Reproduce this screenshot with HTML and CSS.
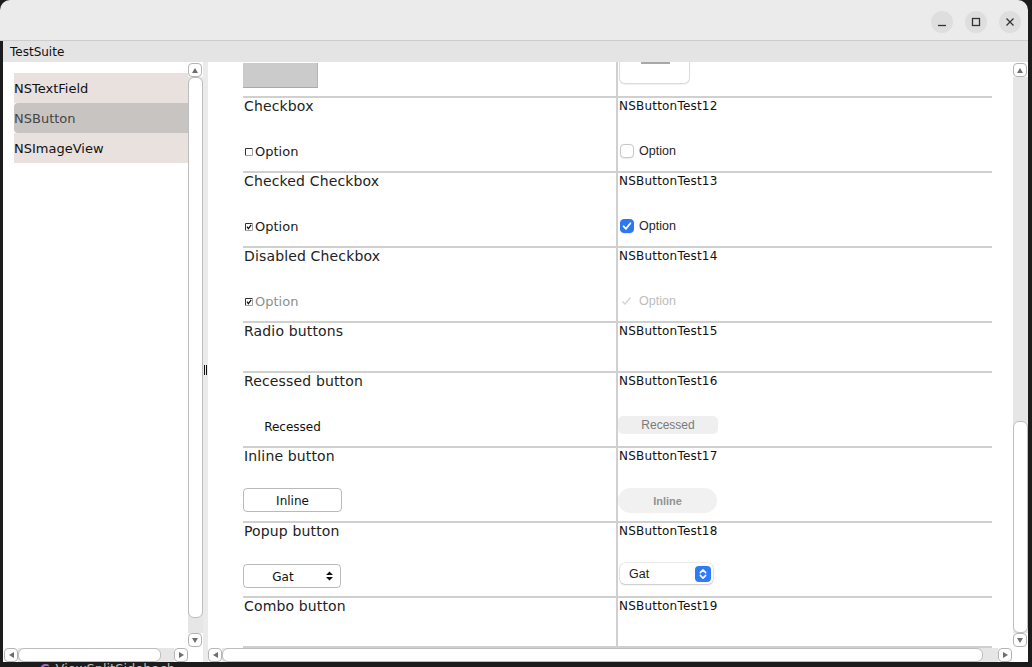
FILE: index.html
```html
<!DOCTYPE html>
<html>
<head>
<meta charset="utf-8">
<link rel="stylesheet" href="styles.css">
</head>
<body>
<div class="titlebar">
  <div class="tb-btn"><svg width="10" height="10" viewBox="0 0 10 10"><path d="M1 8.5H9" stroke="#333" stroke-width="1.3" fill="none"/></svg></div>
  <div class="tb-btn"><svg width="10" height="10" viewBox="0 0 10 10"><rect x="1.5" y="1.5" width="7" height="7" stroke="#333" stroke-width="1.3" fill="none"/></svg></div>
  <div class="tb-btn"><svg width="10" height="10" viewBox="0 0 10 10"><path d="M1.5 1.5L8.5 8.5M8.5 1.5L1.5 8.5" stroke="#333" stroke-width="1.3" fill="none"/></svg></div>
</div>
<div class="win">
  <div class="menubar">TestSuite</div>
  <div class="main">
    <div class="sidebar">
      <div class="pane">
        <div class="side-list">
          <div class="item">NSTextField</div>
          <div class="item sel">NSButton</div>
          <div class="item">NSImageView</div>
        </div>
        <div class="vs side-v">
          <div class="arr"><svg width="6" height="5" viewBox="0 0 6 5"><path d="M0 5L3 0L6 5Z" fill="#6e6e6e"/></svg></div>
          <div class="track"><div class="knob"></div><div class="rest"></div></div>
          <div class="arr"><svg width="6" height="5" viewBox="0 0 6 5"><path d="M0 0L3 5L6 0Z" fill="#6e6e6e"/></svg></div>
        </div>
      </div>
      <div class="hs side-h">
        <div class="arr"><svg width="5" height="6" viewBox="0 0 5 6"><path d="M5 0L0 3L5 6Z" fill="#6e6e6e"/></svg></div>
        <div class="htrack"><div class="hknob"></div></div>
        <div class="arr"><svg width="5" height="6" viewBox="0 0 5 6"><path d="M0 0L5 3L0 6Z" fill="#6e6e6e"/></svg></div>
        <div class="corner"></div>
      </div>
    </div>
    <div class="splitter"><span class="grip"></span></div>
    <div class="content">
      <div class="pane">
        <div class="doc">
          <div class="rows">
            <div class="row partial">
              <div class="cell-l"><div class="ctl graybox"></div></div>
              <div class="cell-r"><div class="ctl whitebox"><span class="wb-bar"></span></div></div>
            </div>

            <div class="row">
              <div class="cell-l">
                <div class="title">Checkbox</div>
                <div class="ctl gopt"><svg class="gcb" width="8" height="8" viewBox="0 0 8 8"><path d="M0.5 7.5V0.5H7.5" stroke="#333" fill="none"/><path d="M7.5 0.5V7.5H0.5" stroke="#a0a0a0" fill="none"/></svg><span>Option</span></div>
              </div>
              <div class="cell-r">
                <div class="label">NSButtonTest12</div>
                <div class="ctl mopt"><span class="mcb"></span><span>Option</span></div>
              </div>
            </div>

            <div class="row">
              <div class="cell-l">
                <div class="title">Checked Checkbox</div>
                <div class="ctl gopt"><svg class="gcb" width="8" height="8" viewBox="0 0 8 8"><path d="M0.5 7.5V0.5H7.5" stroke="#333" fill="none"/><path d="M7.5 0.5V7.5H0.5" stroke="#a0a0a0" fill="none"/><path d="M2 3.6L3.4 5.6L6.2 1.8" stroke="#111" stroke-width="1.2" fill="none"/></svg><span>Option</span></div>
              </div>
              <div class="cell-r">
                <div class="label">NSButtonTest13</div>
                <div class="ctl mopt"><span class="mcb on"><svg width="14" height="14" viewBox="0 0 14 14"><path d="M3.6 7.3L6 9.8L10.4 4.2" stroke="#fff" stroke-width="1.8" fill="none" stroke-linecap="round" stroke-linejoin="round"/></svg></span><span>Option</span></div>
              </div>
            </div>

            <div class="row">
              <div class="cell-l">
                <div class="title">Disabled Checkbox</div>
                <div class="ctl gopt dis"><svg class="gcb" width="8" height="8" viewBox="0 0 8 8"><path d="M0.5 7.5V0.5H7.5" stroke="#333" fill="none"/><path d="M7.5 0.5V7.5H0.5" stroke="#a0a0a0" fill="none"/><path d="M2 3.6L3.4 5.6L6.2 1.8" stroke="#111" stroke-width="1.2" fill="none"/></svg><span>Option</span></div>
              </div>
              <div class="cell-r">
                <div class="label">NSButtonTest14</div>
                <div class="ctl mopt dis"><span class="mcb-off"><svg width="14" height="14" viewBox="0 0 14 14"><path d="M2.5 7.5L5 10L10.5 3.5" stroke="#d2d2d2" stroke-width="1.2" fill="none"/></svg></span><span>Option</span></div>
              </div>
            </div>

            <div class="row short">
              <div class="cell-l"><div class="title">Radio buttons</div></div>
              <div class="cell-r"><div class="label">NSButtonTest15</div></div>
            </div>

            <div class="row">
              <div class="cell-l">
                <div class="title">Recessed button</div>
                <div class="ctl plainbtn">Recessed</div>
              </div>
              <div class="cell-r">
                <div class="label">NSButtonTest16</div>
                <div class="ctl m-rec">Recessed</div>
              </div>
            </div>

            <div class="row">
              <div class="cell-l">
                <div class="title">Inline button</div>
                <div class="ctl btn">Inline</div>
              </div>
              <div class="cell-r">
                <div class="label">NSButtonTest17</div>
                <div class="ctl m-inline">Inline</div>
              </div>
            </div>

            <div class="row">
              <div class="cell-l">
                <div class="title">Popup button</div>
                <div class="ctl popup"><span class="pop-text">Gat</span><svg class="pop-arr" width="7" height="10" viewBox="0 0 7 10"><path d="M0 4L3.5 0.5L7 4Z M0 6L3.5 9.5L7 6Z" fill="#111"/></svg></div>
              </div>
              <div class="cell-r">
                <div class="label">NSButtonTest18</div>
                <div class="ctl m-pop"><span class="pop-text">Gat</span><span class="blue"><svg width="16" height="16" viewBox="0 0 16 16"><path d="M5.3 6.6L8 3.9L10.7 6.6M5.3 9.4L8 12.1L10.7 9.4" stroke="#fff" stroke-width="1.5" fill="none" stroke-linecap="round" stroke-linejoin="round"/></svg></span></div>
              </div>
            </div>

            <div class="row short">
              <div class="cell-l"><div class="title">Combo button</div></div>
              <div class="cell-r"><div class="label">NSButtonTest19</div></div>
            </div>
            <div class="endline"></div>
          </div>
        </div>
        <div class="vs doc-v">
          <div class="arr"><svg width="6" height="5" viewBox="0 0 6 5"><path d="M0 5L3 0L6 5Z" fill="#6e6e6e"/></svg></div>
          <div class="track"><div class="rest"></div><div class="knob"></div></div>
          <div class="arr"><svg width="6" height="5" viewBox="0 0 6 5"><path d="M0 0L3 5L6 0Z" fill="#6e6e6e"/></svg></div>
        </div>
      </div>
      <div class="hs doc-h">
        <div class="arr"><svg width="5" height="6" viewBox="0 0 5 6"><path d="M5 0L0 3L5 6Z" fill="#6e6e6e"/></svg></div>
        <div class="htrack"><div class="hknob"></div></div>
        <div class="arr"><svg width="5" height="6" viewBox="0 0 5 6"><path d="M0 0L5 3L0 6Z" fill="#6e6e6e"/></svg></div>
        <div class="corner"></div>
      </div>
    </div>
  </div>
</div>
<div class="dock"><span class="dock-ic">C</span><span class="dock-txt">ViewSplitSidebach</span></div>
</body>
</html>
```

FILE: styles.css
```css
* { box-sizing: border-box; }
body {
  margin: 0;
  width: 1032px;
  height: 667px;
  overflow: hidden;
  background: #1c1c1c;
  font-family: "DejaVu Sans", sans-serif;
  color: #1a1a1a;
}
.titlebar {
  width: 1028px;
  height: 41px;
  background: #ebebeb;
  border-bottom: 1px solid #cdcdcd;
  border-radius: 10px 10px 0 0;
  display: flex;
  justify-content: flex-end;
  align-items: center;
  gap: 12px;
  padding: 3px 7px 0 0;
}
.tb-btn {
  width: 22px;
  height: 22px;
  border-radius: 50%;
  background: #dedede;
  display: flex;
  align-items: center;
  justify-content: center;
}
.win {
  margin-left: 3px;
  width: 1025px;
  height: 621px;
  background: #fff;
  display: flex;
  flex-direction: column;
}
.menubar {
  flex: none;
  height: 21px;
  background: #e4e4e4;
  font-size: 12px;
  line-height: 20px;
  padding: 1px 0 0 7px;
  color: #111;
}
.main { flex: 1; display: flex; min-height: 0; }
.sidebar { width: 200px; flex: none; display: flex; flex-direction: column; }
.pane { flex: 1; display: flex; min-height: 0; }
.side-list { flex: 1; padding: 11px 0 0 11px; background: #fff; }
.item {
  height: 30px;
  line-height: 28px;
  padding-top: 2px;
  font-size: 13px;
  background: #e8e1de;
  color: #111;
  white-space: nowrap;
}
.item.sel { background: #c8c4c2; color: #454545; border-radius: 4px 0 0 4px; }

.vs { width: 15px; flex: none; display: flex; flex-direction: column; padding: 1px 0; background: #fff; }
.arr {
  width: 14px;
  height: 14px;
  flex: none;
  border: 1px solid #b4b4b4;
  border-radius: 4px;
  background: #fff;
  display: flex;
  align-items: center;
  justify-content: center;
}
.track { flex: 1; background: #e6e6e6; display: flex; flex-direction: column; }
.knob { background: #fff; border: 1px solid #bdbdbd; border-radius: 6px; }
.side-v .knob { flex: 1; }
.side-v .rest { flex: none; height: 15px; }
.doc-v .rest { flex: 1; }
.doc-v .knob { flex: none; height: 212px; }

.hs { height: 14px; flex: none; display: flex; background: #fff; }
.htrack { flex: 1; background: #e6e6e6; display: flex; }
.hknob { background: #fff; border: 1px solid #bdbdbd; border-radius: 6px; }
.side-h { padding-left: 1px; }
.side-h .hknob { width: 143px; }
.side-h .corner { width: 15px; }
.doc-h .hknob { width: 761px; }
.doc-h .corner { width: 16px; }

.splitter {
  width: 5px;
  flex: none;
  background: #ebebeb;
  display: flex;
  align-items: center;
  justify-content: center;
  padding-top: 16px;
}
.grip { width: 3px; height: 10px; border-left: 1px solid #111; border-right: 1px solid #111; margin-left: -1px; }

.content { flex: 1; display: flex; flex-direction: column; min-width: 0; }
.doc { flex: 1; background: #fff; padding-left: 35px; overflow: hidden; }
.rows { width: 749px; }
.row { display: flex; height: 75px; border-top: 2px solid #d0d0d0; }
.row.short { height: 50px; }
.row.partial { height: 34px; border-top: 0; overflow: hidden; }
.cell-l {
  width: 375px;
  flex: none;
  border-right: 2px solid #d0d0d0;
  padding-left: 1px;
  display: flex;
  flex-direction: column;
}
.cell-r { flex: 1; padding-left: 1px; display: flex; flex-direction: column; }
.title { font-size: 14px; line-height: 17px; color: #222; white-space: nowrap; letter-spacing: 0.15px; }
.label { font-size: 12px; line-height: 14px; padding-top: 1px; color: #111; white-space: nowrap; letter-spacing: 0.2px; }
.ctl { margin-top: auto; flex: none; }

.graybox {
  width: 76px;
  height: 25px;
  margin-left: -2px;
  margin-bottom: 8px;
  background: #cbcbcb;
  border-right: 1px solid #b5b5b5;
  border-bottom: 1px solid #a9a9a9;
}
.whitebox {
  width: 71px;
  height: 22px;
  margin-bottom: 12px;
  background: #fff;
  border: 1px solid #dcdcdc;
  border-top: 0;
  border-radius: 0 0 6px 6px;
  box-shadow: 0 1px 1px rgba(0,0,0,0.06);
  display: flex;
  justify-content: center;
}
.wb-bar { width: 29px; height: 2px; background: #a8a8a8; margin-left: 2px; }

.gopt {
  display: flex;
  align-items: center;
  gap: 2px;
  font-size: 13px;
  line-height: 16px;
  margin-bottom: 11px;
  padding-left: 1px;
  color: #1a1a1a;
}
.gopt.dis span { color: #8e8e8e; }
.gcb { flex: none; }

.mopt {
  display: flex;
  align-items: center;
  gap: 5px;
  height: 14px;
  margin-left: 1px;
  margin-bottom: 13px;
  font-family: "Liberation Sans", Arial, sans-serif;
  font-size: 12.5px;
  color: #262626;
}
.mopt.dis span { color: #bdbdbd; }
.mcb {
  width: 14px;
  height: 14px;
  flex: none;
  border-radius: 4px;
  border: 1px solid #c9c9c9;
  background: #fff;
  box-shadow: 0 0.5px 1px rgba(0,0,0,0.08);
}
.mcb.on { background: #2b77f4; border-color: #2b77f4; }
.mcb.on svg { display: block; margin: -1px; }
.mcb-off { width: 14px; height: 14px; flex: none; }
.mcb-off svg { display: block; }

.plainbtn {
  width: 99px;
  height: 24px;
  margin-left: -1px;
  margin-bottom: 8px;
  padding-top: 1px;
  display: flex;
  align-items: center;
  justify-content: center;
  font-size: 12px;
  color: #111;
}
.m-rec {
  width: 100px;
  height: 18px;
  margin-left: -1px;
  margin-bottom: 12px;
  border-radius: 5px;
  background: #efefef;
  display: flex;
  align-items: center;
  justify-content: center;
  font-family: "Liberation Sans", Arial, sans-serif;
  font-size: 12px;
  color: #7a7a7a;
}
.btn {
  width: 99px;
  height: 24px;
  margin-left: -1px;
  margin-bottom: 9px;
  padding-top: 2px;
  border: 1px solid #b9b9b9;
  border-radius: 4px;
  background: #fff;
  display: flex;
  align-items: center;
  justify-content: center;
  font-size: 12px;
  color: #111;
}
.m-inline {
  width: 99px;
  height: 25px;
  margin-left: -1px;
  margin-bottom: 8px;
  border-radius: 13px;
  background: #f1f1f1;
  display: flex;
  align-items: center;
  justify-content: center;
  font-family: "Liberation Sans", Arial, sans-serif;
  font-size: 11px;
  font-weight: bold;
  color: #929292;
}
.popup {
  width: 98px;
  height: 24px;
  margin-left: -1px;
  margin-bottom: 8px;
  border: 1px solid #b9b9b9;
  border-radius: 4px;
  background: #fff;
  display: flex;
  align-items: center;
  font-size: 12px;
  color: #111;
}
.popup .pop-text { flex: 1; text-align: center; padding-top: 2px; }
.pop-arr { flex: none; margin: 0 7px 0 4px; }
.m-pop {
  width: 93px;
  height: 21px;
  margin-left: 1px;
  margin-bottom: 12px;
  border-radius: 5px;
  background: #fff;
  box-shadow: 0 0 0 0.5px rgba(0,0,0,0.14), 0 1px 2px rgba(0,0,0,0.16);
  display: flex;
  align-items: center;
  padding: 0 2px 0 9px;
  font-family: "Liberation Sans", Arial, sans-serif;
  font-size: 12.5px;
  color: #222;
}
.m-pop .pop-text { flex: 1; }
.blue { width: 16px; height: 16px; border-radius: 4px; background: #2f7bf5; flex: none; }
.blue svg { display: block; }
.endline { width: 749px; height: 2px; background: #d0d0d0; }

.dock {
  height: 5px;
  overflow: hidden;
  padding-left: 40px;
  font-size: 13px;
  line-height: 13px;
  color: #bdbdbd;
  white-space: nowrap;
}
.dock-ic { color: #a66bd0; font-weight: bold; margin-right: 6px; }
```
